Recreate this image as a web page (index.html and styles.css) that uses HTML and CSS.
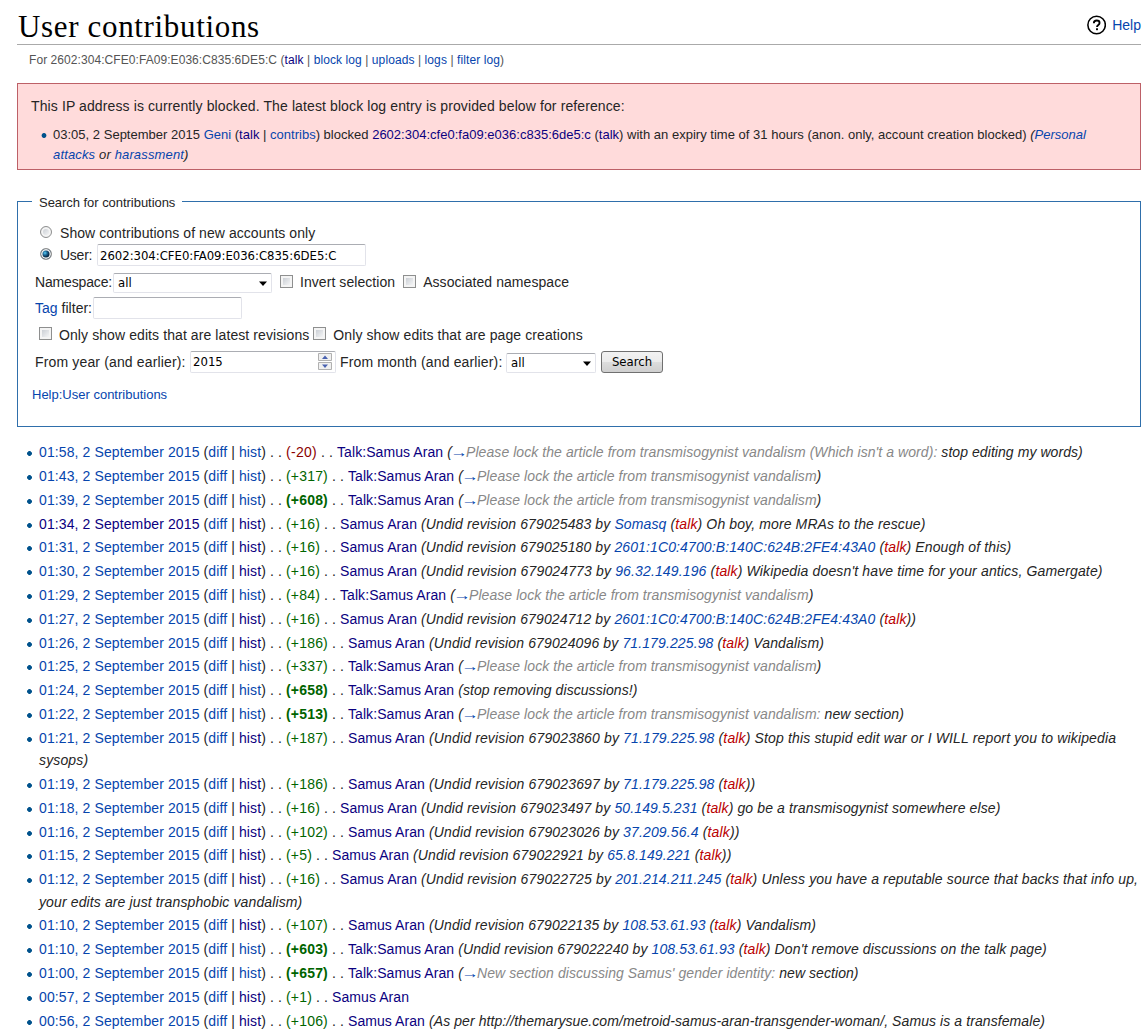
FILE: index.html
```html
<!DOCTYPE html>
<html lang="en">
<head>
<meta charset="utf-8">
<title>User contributions</title>
<link rel="stylesheet" href="styles.css">
</head>
<body>
<header class="heading">
<h1>User contributions</h1>
<div class="help"><svg width="20" height="20" viewBox="0 0 20 20"><circle cx="10" cy="10" r="9.1" fill="none" stroke="#000" stroke-width="1.6"/><path d="M7.100 8.100C7.100 6.100 8.400 5.300 10.100 5.300s3 .9 3 2.500c0 2.200-2.700 2-2.700 4.300" fill="none" stroke="#000" stroke-width="1.900"/><rect x="9.400" y="13.400" width="2" height="2"/></svg><a>Help</a></div>
</header>
<p class="sub">For 2602:304:CFE0:FA09:E036:C835:6DE5:C <span class="tools">(<a class="v">talk</a> | <a>block log</a> | <a>uploads</a> | <a>logs</a> | <a>filter log</a>)</span></p>
<section class="blocked">
<p>This IP address is currently blocked. The latest block log entry is provided below for reference:</p>
<ul><li>03:05, 2 September 2015 <a>Geni</a> (<a class="v">talk</a> | <a>contribs</a>) blocked <a class="v">2602:304:cfe0:fa09:e036:c835:6de5:c</a> (<a class="v">talk</a>) with an expiry time of 31 hours (anon. only, account creation blocked) <i>(<a>Personal</a><br><span class="wrapped"><a>attacks</a> or <a>harassment</a>)</span></i></li></ul>
</section>
<fieldset>
<legend>Search for contributions</legend>
<div class="row r1"><input type="radio" name="who"><label>Show contributions of new accounts only</label></div>
<div class="row r2"><input type="radio" name="who" checked><label>User:</label><input class="field user" type="text" value="2602:304:CFE0:FA09:E036:C835:6DE5:C"></div>
<div class="row r3"><label class="ns">Namespace:</label><span class="select wide">all<svg width="8" height="5"><path d="M0 .5h8L4 5z"/></svg></span><input type="checkbox"><label>Invert selection</label><input type="checkbox"><label>Associated namespace</label></div>
<div class="row r4"><label class="tag"><a>Tag</a> filter:</label><input class="field tagfield" type="text"></div>
<div class="row r5"><input type="checkbox"><label>Only show edits that are latest revisions</label><input type="checkbox"><label>Only show edits that are page creations</label></div>
<div class="row r6"><label class="year">From year (and earlier):</label><span class="field number">2015<svg width="15" height="18" viewBox="0 0 15 18"><path d="M.5.5h13v7H.5zM.5 9.500h13v7H.5z" fill="#f0f0f0" stroke="#b0b0b0"/><path d="M4 6h6l-3-3.500zM4 11.500h6l-3 3.500z" fill="#4a62b0"/></svg></span><label class="month">From month (and earlier):</label><span class="select short">all<svg width="8" height="5"><path d="M0 .5h8L4 5z"/></svg></span><button>Search</button></div>
<p class="helplink"><a>Help:User contributions</a></p>
</fieldset>
<ul class="list">
<li><a>01:58, 2 September 2015</a> (<a>diff</a> | <a>hist</a>) . . <span class="neg">(-20)</span> . . <a class="t">Talk:Samus Aran</a> <i class="sec">(<a class="arrow">→</a><span class="g">Please lock the article from transmisogynist vandalism (Which isn't a word): </span>stop editing my words)</i></li>
<li><a>01:43, 2 September 2015</a> (<a>diff</a> | <a>hist</a>) . . <span class="pos">(+317)</span> . . <a class="t">Talk:Samus Aran</a> <i class="sec">(<a class="arrow">→</a><span class="g">Please lock the article from transmisogynist vandalism</span>)</i></li>
<li><a>01:39, 2 September 2015</a> (<a>diff</a> | <a>hist</a>) . . <b class="pos">(+608)</b> . . <a class="t">Talk:Samus Aran</a> <i class="sec">(<a class="arrow">→</a><span class="g">Please lock the article from transmisogynist vandalism</span>)</i></li>
<li><a class="v">01:34, 2 September 2015</a> (<a>diff</a> | <a class="v">hist</a>) . . <span class="pos">(+16)</span> . . <a class="t">Samus Aran</a> <i>(Undid revision 679025483 by <a>Somasq</a> (<a class="red">talk</a>) Oh boy, more MRAs to the rescue)</i></li>
<li><a>01:31, 2 September 2015</a> (<a>diff</a> | <a class="v">hist</a>) . . <span class="pos">(+16)</span> . . <a class="t">Samus Aran</a> <i>(Undid revision 679025180 by <a>2601:1C0:4700:B:140C:624B:2FE4:43A0</a> (<a class="red">talk</a>) Enough of this)</i></li>
<li><a>01:30, 2 September 2015</a> (<a>diff</a> | <a class="v">hist</a>) . . <span class="pos">(+16)</span> . . <a class="t">Samus Aran</a> <i class="loose">(Undid revision 679024773 by <a>96.32.149.196</a> (<a class="red">talk</a>) Wikipedia doesn't have time for your antics, Gamergate)</i></li>
<li><a>01:29, 2 September 2015</a> (<a>diff</a> | <a>hist</a>) . . <span class="pos">(+84)</span> . . <a class="t">Talk:Samus Aran</a> <i class="sec">(<a class="arrow">→</a><span class="g">Please lock the article from transmisogynist vandalism</span>)</i></li>
<li><a>01:27, 2 September 2015</a> (<a>diff</a> | <a class="v">hist</a>) . . <span class="pos">(+16)</span> . . <a class="t">Samus Aran</a> <i>(Undid revision 679024712 by <a>2601:1C0:4700:B:140C:624B:2FE4:43A0</a> (<a class="red">talk</a>))</i></li>
<li><a>01:26, 2 September 2015</a> (<a>diff</a> | <a class="v">hist</a>) . . <span class="pos">(+186)</span> . . <a class="t">Samus Aran</a> <i>(Undid revision 679024096 by <a>71.179.225.98</a> (<a class="red">talk</a>) Vandalism)</i></li>
<li><a>01:25, 2 September 2015</a> (<a>diff</a> | <a>hist</a>) . . <span class="pos">(+337)</span> . . <a class="t">Talk:Samus Aran</a> <i class="sec">(<a class="arrow">→</a><span class="g">Please lock the article from transmisogynist vandalism</span>)</i></li>
<li><a>01:24, 2 September 2015</a> (<a>diff</a> | <a>hist</a>) . . <b class="pos">(+658)</b> . . <a class="t">Talk:Samus Aran</a> <i class="sec">(stop removing discussions!)</i></li>
<li><a>01:22, 2 September 2015</a> (<a>diff</a> | <a>hist</a>) . . <b class="pos">(+513)</b> . . <a class="t">Talk:Samus Aran</a> <i class="sec">(<a class="arrow">→</a><span class="g">Please lock the article from transmisogynist vandalism: </span>new section)</i></li>
<li><a>01:21, 2 September 2015</a> (<a>diff</a> | <a class="v">hist</a>) . . <span class="pos">(+187)</span> . . <a class="t">Samus Aran</a> <i class="loose">(Undid revision 679023860 by <a>71.179.225.98</a> (<a class="red">talk</a>) Stop this stupid edit war or I WILL report you to wikipedia<br>sysops)</i></li>
<li><a>01:19, 2 September 2015</a> (<a>diff</a> | <a class="v">hist</a>) . . <span class="pos">(+186)</span> . . <a class="t">Samus Aran</a> <i class="loose">(Undid revision 679023697 by <a>71.179.225.98</a> (<a class="red">talk</a>))</i></li>
<li><a>01:18, 2 September 2015</a> (<a>diff</a> | <a class="v">hist</a>) . . <span class="pos">(+16)</span> . . <a class="t">Samus Aran</a> <i>(Undid revision 679023497 by <a>50.149.5.231</a> (<a class="red">talk</a>) go be a transmisogynist somewhere else)</i></li>
<li><a>01:16, 2 September 2015</a> (<a>diff</a> | <a class="v">hist</a>) . . <span class="pos">(+102)</span> . . <a class="t">Samus Aran</a> <i class="loose">(Undid revision 679023026 by <a>37.209.56.4</a> (<a class="red">talk</a>))</i></li>
<li><a>01:15, 2 September 2015</a> (<a>diff</a> | <a class="v">hist</a>) . . <span class="pos">(+5)</span> . . <a class="t">Samus Aran</a> <i class="loose">(Undid revision 679022921 by <a>65.8.149.221</a> (<a class="red">talk</a>))</i></li>
<li><a>01:12, 2 September 2015</a> (<a>diff</a> | <a class="v">hist</a>) . . <span class="pos">(+16)</span> . . <a class="t">Samus Aran</a> <i><span class="loose">(Undid revision 679022725 by <a>201.214.211.245</a> (<a class="red">talk</a>) Unless you have a reputable source that backs that info up,</span><br>your edits are just transphobic vandalism)</i></li>
<li><a>01:10, 2 September 2015</a> (<a>diff</a> | <a class="v">hist</a>) . . <span class="pos">(+107)</span> . . <a class="t">Samus Aran</a> <i>(Undid revision 679022135 by <a>108.53.61.93</a> (<a class="red">talk</a>) Vandalism)</i></li>
<li><a>01:10, 2 September 2015</a> (<a>diff</a> | <a>hist</a>) . . <b class="pos">(+603)</b> . . <a class="t">Talk:Samus Aran</a> <i>(Undid revision 679022240 by <a>108.53.61.93</a> (<a class="red">talk</a>) Don't remove discussions on the talk page)</i></li>
<li><a>01:00, 2 September 2015</a> (<a>diff</a> | <a>hist</a>) . . <b class="pos">(+657)</b> . . <a class="t">Talk:Samus Aran</a> <i class="sec">(<a class="arrow">→</a><span class="g">New section discussing Samus' gender identity: </span>new section)</i></li>
<li><a>00:57, 2 September 2015</a> (<a>diff</a> | <a class="v">hist</a>) . . <span class="pos">(+1)</span> . . <a class="t">Samus Aran</a></li>
<li><a>00:56, 2 September 2015</a> (<a>diff</a> | <a class="v">hist</a>) . . <span class="pos">(+106)</span> . . <a class="t">Samus Aran</a> <i class="url">(As per http://themarysue.com/metroid-samus-aran-transgender-woman/, Samus is a transfemale)</i></li>
</ul>
</body>
</html>
```
FILE: styles.css
```css
*{box-sizing:border-box}
html{overflow:hidden}
body{margin:0;background:#fff;color:#252525;font:14px/22.4px "Liberation Sans",Arial,sans-serif;padding:0 4px 0 17px}
a{color:#0645ad}
.v,.t{color:#0b0080}
.red{color:#ba0000}
.g{color:#888}

.heading{height:45px;border-bottom:1px solid #aaa;display:flex;justify-content:space-between}
h1{font:31px/36px "Liberation Serif",Georgia,serif;letter-spacing:.66px;color:#000;margin:9px 0 0 1px}
.help{display:flex;gap:6px;padding-top:15px;line-height:20px;white-space:nowrap;width:54px}
.sub{font-size:12px;line-height:18px;letter-spacing:.065px;margin:6px 0 0 12px;color:#545454;white-space:nowrap}
.tools{letter-spacing:.09px}

.blocked{margin-top:14px;height:87px;border:1px solid #bd6067;background:#ffdbdb;padding:11px 13px}
.blocked p{margin:0;white-space:nowrap;letter-spacing:.11px}
.blocked ul{list-style:none;margin:8px 0 0 10px;padding:0;font-size:13px;line-height:20px;white-space:nowrap;letter-spacing:.012px}
.blocked li{padding-left:12px;background:radial-gradient(circle at 3px 10.5px,#00528c 2px,transparent 2.8px)}
.wrapped{letter-spacing:.15px}

fieldset{margin:22px 0 0;height:235px;border:1px solid #2f6fab;padding:11px 0 0 14px;white-space:nowrap}
legend{font-size:13px;line-height:17px;padding:2px 7px 0;letter-spacing:-.04px}
.row{display:flex;align-items:center;height:22px;letter-spacing:.06px}
input,.field,.select,button{font:13px/18px "DejaVu Sans Condensed","DejaVu Sans",sans-serif;font-stretch:condensed;color:#000;margin:0;letter-spacing:0}
.field{height:22px;border:1px solid #e2e3ea;border-top-color:#abadb3;border-radius:2px;padding:1px 2px;background:#fff}
.user{letter-spacing:-.03px}
.select{display:flex;justify-content:space-between;align-items:center;height:20px;border:1px solid #e2e3ea;border-top-color:#abadb3;border-radius:2px;padding:1px 4px}
input[type=radio],input[type=checkbox]{appearance:none;flex:none;width:13px;height:13px;border:1px solid #8e8f8f;background:linear-gradient(135deg,#bfc4cb,#fff);box-shadow:inset 0 0 0 2px #f4f4f4}
input[type=radio]{border-radius:50%;width:12px;height:12px;margin-top:-2px}
input[type=radio]:checked{background:radial-gradient(circle at 4px 4px,#5fd0f5 0,#1c6a9a 2px,#0a2c48 4px);box-shadow:inset 0 0 0 1.5px #f0f0f0}
.r1,.r2{padding-left:8px}
.r1 label,.r2 label{margin-left:8px;width:37px}
.r2 label{letter-spacing:-.25px}
.user{width:269px}
.r3{margin-top:5px;height:24px;padding-left:3px}
.r3 label{margin-top:-2px}
.ns{width:78px;letter-spacing:-.16px}
.wide{width:159px}
.r3 input{margin:-3px 7px 0 8px}
.r4{margin-top:2px;padding-left:3px}
.tag{width:58px;letter-spacing:.02px}
.tagfield{width:149px}
.r5{margin-top:5px;padding-left:7px;letter-spacing:.09px}
.r5 input{margin:-4px 7px 0 0}
.r5 label+input{margin-left:4px}
.r6{margin-top:5px;padding-left:3px;letter-spacing:.15px}
.year{width:155px}
.number{width:146px;display:flex;justify-content:space-between;align-items:center}
.month{margin-left:4px;width:166px}
.short{width:90px;margin-top:2px}
button{width:62px;height:22px;margin-left:5px;border:1px solid #707070;border-radius:3px;background:linear-gradient(#f2f2f2,#ebebeb 50%,#ddd 51%,#cfcfcf);padding:0}
.helplink{margin:12px 0 0;font-size:13px;line-height:20px}

.list{list-style:none;margin:14.3px 0 0;padding:0 0 0 9px;letter-spacing:.11px}
.list li{padding-left:13px;margin-bottom:1.4px;white-space:nowrap;background:radial-gradient(circle at 3.5px 12.5px,#00528c 2px,transparent 2.8px)}
.list i{letter-spacing:.12px}
.list .sec{letter-spacing:.065px}
.list .url{letter-spacing:.085px}
.list .loose{letter-spacing:.145px}
.list .t{letter-spacing:.075px}
.arrow{display:inline-block;line-height:1;height:14px;transform:scaleX(1.25)}
.pos,.neg{color:#006400;letter-spacing:.19px}
.neg{color:#8b0000;letter-spacing:.3px}
```
